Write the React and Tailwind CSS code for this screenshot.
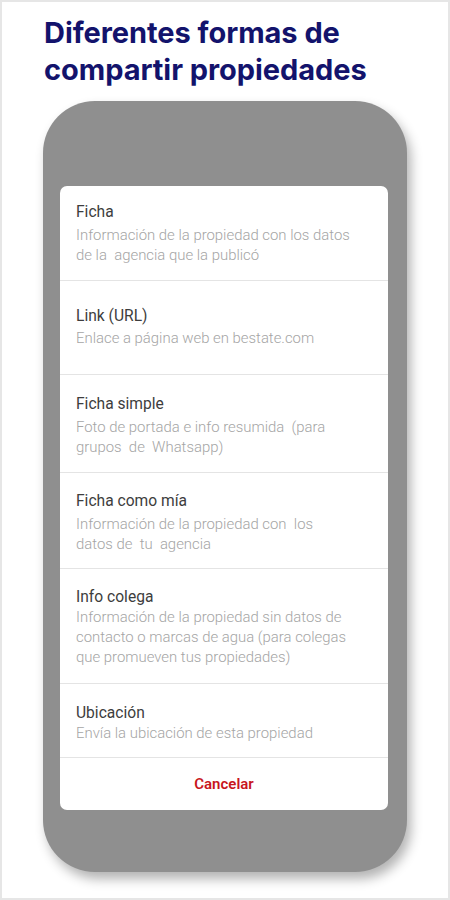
import React from "react";

const options = [
  {
    title: "Ficha",
    desc: ["Información de la propiedad con los datos", "de la  agencia que la publicó"],
    row: "h-[95px] pt-[16px]",
    gap: "mt-[3px]",
  },
  {
    title: "Link (URL)",
    desc: ["Enlace a página web en bestate.com"],
    row: "h-[94px] pt-[25px]",
    gap: "mt-[2px]",
  },
  {
    title: "Ficha simple",
    desc: ["Foto de portada e info resumida  (para", "grupos  de  Whatsapp)"],
    row: "h-[98px] pt-[19px]",
    gap: "mt-[3px]",
  },
  {
    title: "Ficha como mía",
    desc: ["Información de la propiedad con  los", "datos de  tu  agencia"],
    row: "h-[96px] pt-[18px]",
    gap: "mt-[3px]",
  },
  {
    title: "Info colega",
    desc: [
      "Información de la propiedad sin datos de",
      "contacto o marcas de agua (para colegas",
      "que promueven tus propiedades)",
    ],
    row: "h-[115px] pt-[18px]",
    gap: "mt-0",
  },
  {
    title: "Ubicación",
    desc: ["Envía la ubicación de esta propiedad"],
    row: "h-[74px] pt-[19px]",
    gap: "mt-0",
  },
];

const App = () => {
  return (
    <div className="w-[450px] h-[900px] bg-white border-2 border-[#e6e6e6] overflow-hidden font-['Roboto',sans-serif]">
      <h1 className="pl-[42px] pt-[12px] text-[29px] leading-[37px] font-bold tracking-[-0.05px] text-[#13136c] font-['Inter',sans-serif]">
        Diferentes formas de
        <br />
        compartir propiedades
      </h1>

      {/* phone mockup */}
      <div className="ml-[41px] mt-[13px] w-[364px] h-[771px] rounded-[52px] bg-[#8f8f8f] shadow-[4px_7px_12px_rgba(0,0,0,0.3)] pt-[85px] pl-[17px] pr-[19px]">
        <div className="bg-white rounded-[7px] overflow-hidden">
          {options.map((opt) => (
            <div
              key={opt.title}
              className={`${opt.row} px-[16px] border-b border-[#e4e4e4]`}
            >
              <div className="text-[15.6px] leading-[20px] text-[#3d3d3d]">
                {opt.title}
              </div>
              <div className={`${opt.gap} text-[14.9px] leading-[20px] font-light text-[#a5a5a5] whitespace-pre`}>
                {opt.desc.map((line) => (
                  <div key={line}>{line}</div>
                ))}
              </div>
            </div>
          ))}
          <div className="h-[52px] flex items-center justify-center text-[15px] font-semibold text-[#c8161d]">
            Cancelar
          </div>
        </div>
      </div>
    </div>
  );
};

export default App;
